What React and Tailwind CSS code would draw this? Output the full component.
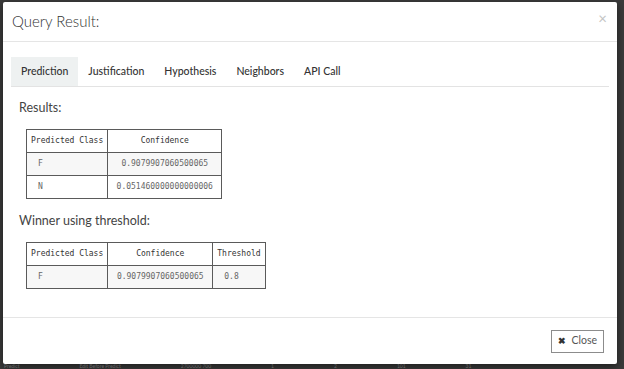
import React from 'react'

const mono = { fontFamily: '"DejaVu Sans Mono", "Liberation Mono", monospace' }

const ResultTable = ({ columns, rows }) => (
  <table className="border-collapse text-[8px] whitespace-nowrap" style={mono}>
    <thead>
      <tr>
        {columns.map((col) => (
          <th
            key={col.label}
            className={`border border-[#5a5a5a] h-[23px] px-[4px] font-normal text-[#333] text-center ${col.w}`}
          >
            {col.label}
          </th>
        ))}
      </tr>
    </thead>
    <tbody>
      {rows.map((row, i) => (
        <tr key={i} className={i % 2 === 0 ? 'bg-[#f7f7f7]' : 'bg-white'}>
          {row.map((cell, j) => (
            <td
              key={j}
              className={`border border-[#5a5a5a] h-[23px] text-[#666] ${columns[j].cell}`}
            >
              {cell}
            </td>
          ))}
        </tr>
      ))}
    </tbody>
  </table>
)

const App = () => {
  const tabs = ['Prediction', 'Justification', 'Hypothesis', 'Neighbors', 'API Call']

  return (
    <div
      className="relative w-[624px] h-[369px] overflow-hidden bg-[#3b3b3b]"
      style={{ fontFamily: 'Lato, "Open Sans", sans-serif' }}
    >
      {/* page behind the dialog */}
      <div className="flex flex-col h-full justify-end text-[#8a8a8a]">
        <div className="flex items-end gap-[60px] pl-[4px] h-[5px] text-[5px] leading-[5px]">
          <span>Predict</span>
          <span>Edit Before Predict</span>
          <span>2700000 700</span>
          <span>1</span>
          <span>2</span>
          <span>101</span>
          <span>31</span>
        </div>
      </div>

      {/* dialog */}
      <div className="absolute left-[3px] top-[2px] w-[614px] h-[362px] bg-white rounded-[2px] shadow-[0_3px_9px_rgba(0,0,0,0.5)] flex flex-col">
        <div className="flex items-center justify-between h-[40px] pl-[9px] pr-[10px] border-b border-[#e5e5e5]">
          <h4 className="text-[15px] text-[#333] font-light leading-none">Query Result:</h4>
          <span className="text-[#c4c4c4] text-[15px] leading-none -mt-[6px]">×</span>
        </div>

        <div className="flex-1 px-[8px] pt-[15px]">
          <div className="flex border-b border-[#e3e3e3] h-[30px]">
            {tabs.map((tab, i) => (
              <div
                key={tab}
                className={`flex items-center px-[10px] text-[10.5px] font-medium text-[#333] ${
                  i === 0 ? 'bg-[#eef1f1]' : ''
                }`}
              >
                {tab}
              </div>
            ))}
          </div>

          <div className="pl-[8px]">
            <p className="text-[12.5px] text-[#444] mt-[13px] leading-[16px]">Results:</p>
            <div className="pl-[7px] mt-[13px]">
              <ResultTable
                columns={[
                  { label: 'Predicted Class', w: 'w-[78px]', cell: 'pl-[11px]' },
                  { label: 'Confidence', w: 'w-[114px]', cell: 'text-center' },
                ]}
                rows={[
                  ['F', '0.9079907060500065'],
                  ['N', '0.051460000000000006'],
                ]}
              />
            </div>

            <p className="text-[12.5px] text-[#444] mt-[14px] leading-[16px]">Winner using threshold:</p>
            <div className="pl-[7px] mt-[13px]">
              <ResultTable
                columns={[
                  { label: 'Predicted Class', w: 'w-[78px]', cell: 'pl-[11px]' },
                  { label: 'Confidence', w: 'w-[105px]', cell: 'text-center' },
                  { label: 'Threshold', w: 'w-[50px]', cell: 'pl-[11px]' },
                ]}
                rows={[['F', '0.9079907060500065', '0.8']]}
              />
            </div>
          </div>
        </div>

        <div className="flex justify-end items-center h-[47px] pr-[13px] border-t border-[#e5e5e5]">
          <button className="flex items-center gap-[5px] h-[23px] px-[6px] border border-[#8c8c8c] text-[10.5px] text-[#555] bg-white">
            <span className="text-[9px] font-bold text-[#333]">✖</span>
            Close
          </button>
        </div>
      </div>
    </div>
  )
}

export default App
